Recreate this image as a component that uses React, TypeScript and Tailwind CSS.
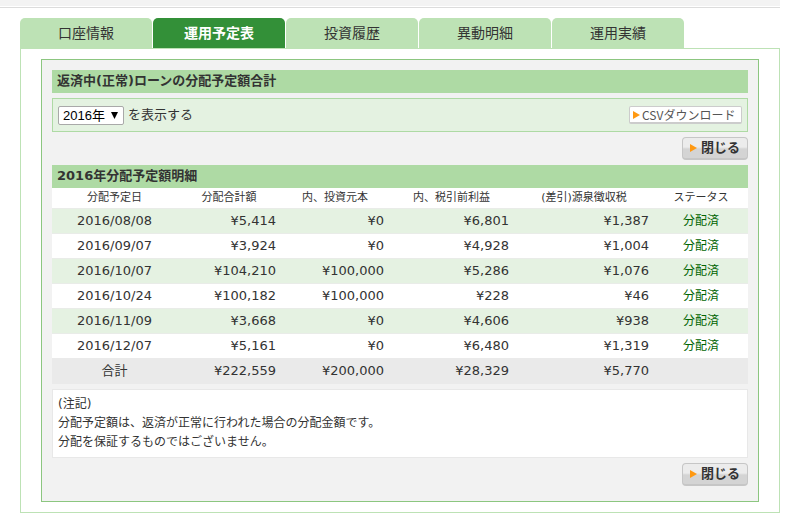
import { useState } from "react";

const tabs = ["口座情報", "運用予定表", "投資履歴", "異動明細", "運用実績"];

const rows = [
  ["2016/08/08", "¥5,414", "¥0", "¥6,801", "¥1,387", "分配済"],
  ["2016/09/07", "¥3,924", "¥0", "¥4,928", "¥1,004", "分配済"],
  ["2016/10/07", "¥104,210", "¥100,000", "¥5,286", "¥1,076", "分配済"],
  ["2016/10/24", "¥100,182", "¥100,000", "¥228", "¥46", "分配済"],
  ["2016/11/09", "¥3,668", "¥0", "¥4,606", "¥938", "分配済"],
  ["2016/12/07", "¥5,161", "¥0", "¥6,480", "¥1,319", "分配済"],
];

const total = ["合計", "¥222,559", "¥200,000", "¥28,329", "¥5,770", ""];

function Marker() {
  return (
    <svg width="7" height="8" viewBox="0 0 7 8" className="shrink-0" aria-hidden="true">
      <path d="M0 0L7 4L0 8Z" fill="#ff9912" />
    </svg>
  );
}

function CloseButton() {
  return (
    <div className="flex justify-end py-[5px]">
      <button
        type="button"
        className="flex h-[23px] w-[66px] items-center gap-1 rounded border border-b-2 border-[#c6c6c6] bg-linear-to-b from-[#ececec] from-45% to-[#d4d4d4] to-55% pl-[7px] text-[13px] leading-5 font-bold whitespace-nowrap text-[#333]"
      >
        <Marker />
        閉じる
      </button>
    </div>
  );
}

function SectionTitle({ children }: { children: string }) {
  return (
    <h2 className="h-[23px] bg-[#aedaa4] px-[5px] text-[13px] leading-[22px] font-bold">{children}</h2>
  );
}

function cellClass(index: number) {
  if (index === 0) return "p-0 text-center";
  if (index === 5) return "p-0 text-center text-xs text-[#006400]";
  return "py-0 pr-[5px] pl-0 text-right";
}

export default function App() {
  const [year, setYear] = useState("2016");

  return (
    <div className="bg-white pr-6 font-['DejaVu_Sans','Noto_Sans_CJK_JP',sans-serif] text-[13px] text-[#333]">
      <header className="h-2 border-b border-[#dcdcdc] bg-white pb-px">
        <div className="h-full bg-[#f3f3f3]" />
      </header>

      <div className="pt-[10px] pl-5">
        <nav>
          <ul className="flex gap-px">
            {tabs.map((tab, i) => (
              <li key={tab} className="w-[132px]">
                <a
                  href="#"
                  aria-current={i === 1 ? "page" : undefined}
                  className={
                    i === 1
                      ? "block h-[30px] rounded-t-[5px] bg-[#339038] text-center text-sm leading-[30px] font-bold text-white"
                      : "block h-[30px] rounded-t-[5px] bg-[#bde2b5] text-center text-sm leading-[30px]"
                  }
                >
                  {tab}
                </a>
              </li>
            ))}
          </ul>
        </nav>

        <main className="border border-[#bde2b5] px-5 py-[10px]">
          <div className="border border-[#8cc680] bg-[#f2f2f2] px-[10px] pt-[10px] pb-[10px]">
            <SectionTitle>返済中(正常)ローンの分配予定額合計</SectionTitle>

            <div className="mt-[5px] flex h-[34px] items-center border border-[#aedaa4] bg-[#e4f2e1] px-[5px]">
              <div className="relative">
                <select
                  id="year"
                  value={year}
                  onChange={(e) => setYear(e.target.value)}
                  className="block h-[19px] w-[66px] appearance-none rounded-xs border border-[#a9a9a9] bg-white pl-1 font-['Liberation_Sans','Noto_Sans_CJK_JP',sans-serif] text-[13px] leading-[17px] text-black"
                >
                  <option value="2016">2016年</option>
                  <option value="2015">2015年</option>
                </select>
                <svg
                  width="7"
                  height="7"
                  viewBox="0 0 7 7"
                  className="pointer-events-none absolute top-[6px] right-[6px]"
                  aria-hidden="true"
                >
                  <path d="M0 0H7L3.5 7Z" fill="#000" />
                </svg>
              </div>
              <label htmlFor="year" className="ml-1 leading-5">
                を表示する
              </label>
              <button
                type="button"
                className="ml-auto flex h-[18px] w-[113px] items-center gap-[2px] rounded-xs border border-b-2 border-[#cccccc] bg-white pl-[3px] font-['Liberation_Sans_Narrow','Noto_Sans_CJK_JP',sans-serif] text-xs leading-4 whitespace-nowrap text-[#555]"
              >
                <Marker />
                CSVダウンロード
              </button>
            </div>

            <CloseButton />

            <SectionTitle>2016年分配予定額明細</SectionTitle>
            <table className="w-full table-fixed border-separate border-spacing-0">
              <colgroup>
                <col className="w-[125px]" />
                <col className="w-[104px]" />
                <col className="w-[108px]" />
                <col className="w-[125px]" />
                <col className="w-[140px]" />
                <col className="w-[94px]" />
              </colgroup>
              <thead>
                <tr className="h-5 bg-white text-[11px] leading-[18px]">
                  <th className="p-0 font-normal">分配予定日</th>
                  <th className="p-0 font-normal">分配合計額</th>
                  <th className="p-0 font-normal">内、投資元本</th>
                  <th className="p-0 font-normal">内、税引前利益</th>
                  <th className="p-0 font-normal">(差引)源泉徴収税</th>
                  <th className="p-0 font-normal">ステータス</th>
                </tr>
              </thead>
              <tbody>
                {rows.map((row) => (
                  <tr key={row[0]} className="h-[25px] bg-white leading-6 odd:bg-[#e5f2e2]">
                    {row.map((cell, i) => (
                      <td key={i} className={cellClass(i) + " border-t border-[#e9ece8]"}>
                        {cell}
                      </td>
                    ))}
                  </tr>
                ))}
              </tbody>
              <tfoot>
                <tr className="h-[26px] bg-[#eaeaea] leading-6">
                  {total.map((cell, i) => (
                    <td key={i} className={cellClass(i)}>
                      {cell}
                    </td>
                  ))}
                </tr>
              </tfoot>
            </table>

            <div className="mt-[5px] border border-[#e8e8e8] bg-white p-[5px] text-xs leading-[19px]">
              <p>(注記)</p>
              <p>分配予定額は、返済が正常に行われた場合の分配金額です。</p>
              <p>分配を保証するものではございません。</p>
            </div>

            <CloseButton />
          </div>
        </main>
      </div>
    </div>
  );
}
